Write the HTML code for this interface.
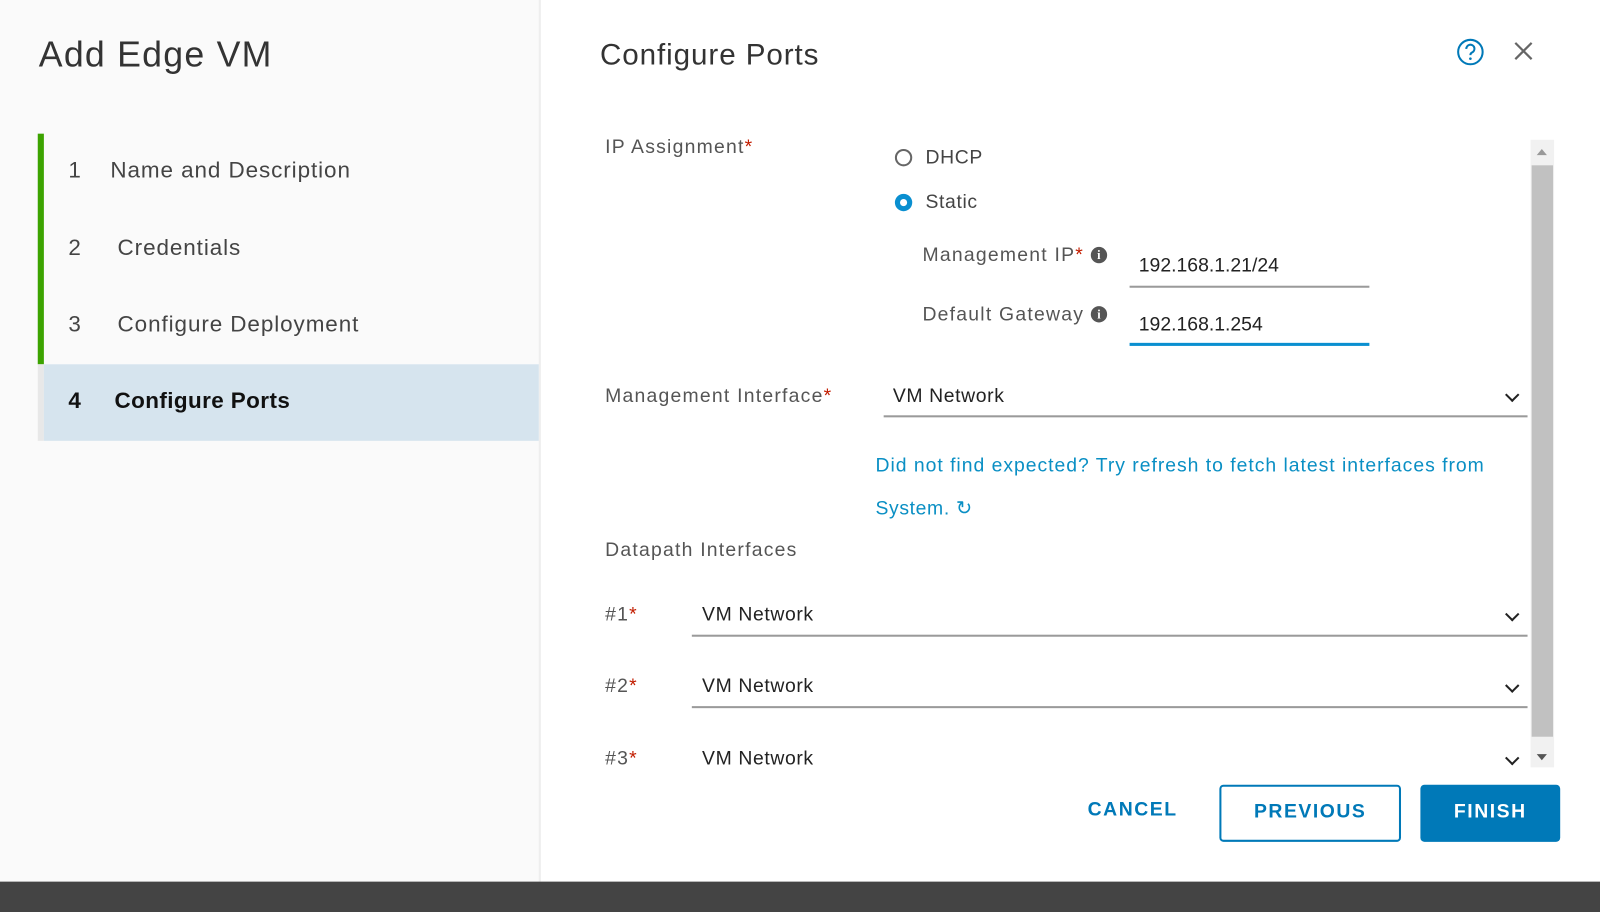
<!DOCTYPE html>
<html><head><meta charset="utf-8"><style>
*{margin:0;padding:0;box-sizing:border-box}
body{width:1600px;height:884px;overflow:hidden;background:#fff;font-family:"Liberation Sans",sans-serif;position:relative;color:#333}
#w{position:absolute;left:0;top:0;width:1568px;height:866px;transform:scale(1.0204);transform-origin:0 0}
.a{position:absolute;white-space:nowrap}
.left{left:0;top:0;width:530px;height:864px;background:#fafafa;border-right:2px solid #eee}
.bottom{left:0;top:864px;width:1600px;height:30px;background:#444}
.t{font-size:22px;color:#444;letter-spacing:0.9px}
.lbl{font-size:19px;color:#555;letter-spacing:1.2px}
.v{font-size:19px;color:#222;letter-spacing:0.6px}
.req{color:#c21d00}
.line{height:2px;background:#9a9a9a}
.chev{width:10px;height:10px;border-right:2px solid #222;border-bottom:2px solid #222;transform:rotate(45deg)}
.info{display:inline-block;width:16px;height:16px;border-radius:50%;background:#555;color:#fff;font-size:12px;font-weight:bold;text-align:center;line-height:16px;vertical-align:2px;font-family:"Liberation Serif",serif;letter-spacing:0}
.btn{font-size:19px;font-weight:bold;letter-spacing:1.5px;color:#0079b8;text-align:center;border-radius:4px}
</style></head><body>
<div id="w">
<div class="a left"></div>
<div class="a" style="left:38px;top:34px;font-size:35px;color:#333;letter-spacing:1.2px">Add Edge VM</div>
<div class="a" style="left:37px;top:131px;width:6px;height:226px;background:#3ca300"></div>
<div class="a" style="left:37px;top:357px;width:6px;height:75px;background:#e8e8e8"></div>
<div class="a" style="left:43px;top:357px;width:485px;height:75px;background:#d6e4ee"></div>
<div class="a t" style="left:67px;top:154px">1&nbsp;&nbsp;&nbsp;&nbsp;Name and Description</div>
<div class="a t" style="left:67px;top:230px">2&nbsp;&nbsp;&nbsp;&nbsp;&nbsp;Credentials</div>
<div class="a t" style="left:67px;top:305px">3&nbsp;&nbsp;&nbsp;&nbsp;&nbsp;Configure Deployment</div>
<div class="a t" style="left:67px;top:380px;color:#111;font-weight:bold;letter-spacing:0.4px">4&nbsp;&nbsp;&nbsp;&nbsp;&nbsp;Configure Ports</div>

<div class="a" style="left:588px;top:38px;font-size:29px;color:#333;letter-spacing:0.9px">Configure Ports</div>
<svg class="a" style="left:1427px;top:37px" width="28" height="28" viewBox="0 0 28 28"><circle cx="14" cy="14" r="12" fill="none" stroke="#0079b8" stroke-width="2"/><path d="M10 11a4 4 0 1 1 5.5 3.5c-1 .5-1.5 1-1.5 2.5" fill="none" stroke="#0079b8" stroke-width="2"/><circle cx="14" cy="20.5" r="1.3" fill="#0079b8"/></svg>
<svg class="a" style="left:1483px;top:40px" width="20" height="20"><path d="M2 2L18 18M18 2L2 18" stroke="#666" stroke-width="2.2"/></svg>

<div class="a lbl" style="left:593px;top:134px">IP Assignment<span class="req">*</span></div>
<div class="a" style="left:877px;top:146px;width:17px;height:17px;border:2px solid #666;border-radius:50%"></div>
<div class="a v" style="left:907px;top:144px;color:#444">DHCP</div>
<div class="a" style="left:877px;top:190px;width:17px;height:17px;border:5px solid #0a8fd0;border-radius:50%;background:#fff"></div>
<div class="a v" style="left:907px;top:188px;color:#444">Static</div>
<div class="a lbl" style="left:904px;top:240px">Management IP<span class="req">*</span> <span class="info">i</span></div>
<div class="a v" style="left:1116px;top:250px;letter-spacing:0">192.168.1.21/24</div>
<div class="a line" style="left:1107px;top:280px;width:235px"></div>
<div class="a lbl" style="left:904px;top:298px">Default Gateway <span class="info">i</span></div>
<div class="a v" style="left:1116px;top:308px;letter-spacing:0">192.168.1.254</div>
<div class="a" style="left:1107px;top:336px;width:235px;height:3px;background:#0a8fd0"></div>

<div class="a lbl" style="left:593px;top:378px">Management Interface<span class="req">*</span></div>
<div class="a v" style="left:875px;top:378px">VM Network</div>
<div class="chev a" style="left:1477px;top:382px"></div>
<div class="a line" style="left:866px;top:407px;width:631px"></div>
<div class="a" style="left:858px;top:446px;font-size:19px;color:#0a8fc4;letter-spacing:0.95px">Did not find expected? Try refresh to fetch latest interfaces from</div>
<div class="a" style="left:858px;top:487px;font-size:19px;color:#0a8fc4;letter-spacing:0.6px">System. <span>&#x21BB;</span></div>

<div class="a lbl" style="left:593px;top:529px">Datapath Interfaces</div>
<div class="a lbl" style="left:593px;top:592px">#1<span class="req">*</span></div>
<div class="a v" style="left:688px;top:592px">VM Network</div>
<div class="chev a" style="left:1477px;top:597px"></div>
<div class="a line" style="left:678px;top:622px;width:819px"></div>
<div class="a lbl" style="left:593px;top:662px">#2<span class="req">*</span></div>
<div class="a v" style="left:688px;top:662px">VM Network</div>
<div class="chev a" style="left:1477px;top:667px"></div>
<div class="a line" style="left:678px;top:692px;width:819px"></div>
<div class="a lbl" style="left:593px;top:733px">#3<span class="req">*</span></div>
<div class="a v" style="left:688px;top:733px">VM Network</div>
<div class="chev a" style="left:1477px;top:738px"></div>

<div class="a" style="left:1500px;top:137px;width:23px;height:615px;background:#f1f1f1"></div>
<div class="a" style="left:1501px;top:162px;width:21px;height:560px;background:#c1c1c1"></div>
<div class="a" style="left:1506px;top:146px;width:0;height:0;border-left:5px solid transparent;border-right:5px solid transparent;border-bottom:6px solid #999"></div>
<div class="a" style="left:1506px;top:739px;width:0;height:0;border-left:5px solid transparent;border-right:5px solid transparent;border-top:6px solid #555"></div>

<div class="a btn" style="left:1045px;top:783px;width:130px">CANCEL</div>
<div class="a btn" style="left:1195px;top:769px;width:178px;height:56px;border:2px solid #0079b8;line-height:50px">PREVIOUS</div>
<div class="a btn" style="left:1392px;top:769px;width:137px;height:56px;background:#0079b8;color:#fff;line-height:54px">FINISH</div>
<div class="a bottom"></div>
</div>
</body></html>
